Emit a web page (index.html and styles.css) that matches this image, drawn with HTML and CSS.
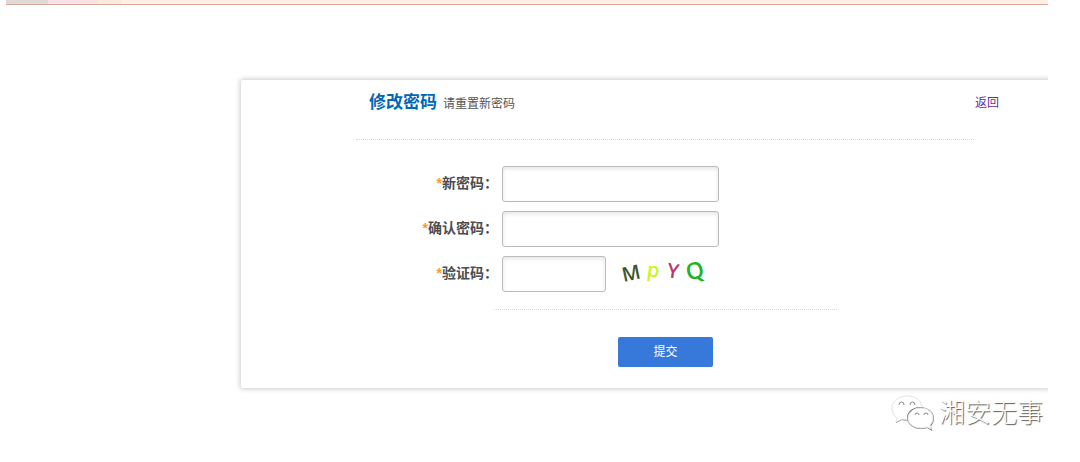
FILE: index.html
```html
<!DOCTYPE html>
<html lang="zh-CN">
<head>
<meta charset="utf-8">
<title>修改密码</title>
<link rel="stylesheet" href="styles.css">
</head>
<body>
<div class="page">
  <div class="banner"></div>
  <main class="stage">
    <section class="card">
      <header class="card-head">
        <h1 class="title">修改密码</h1>
        <span class="subtitle">请重置新密码</span>
        <a class="back" href="#">返回</a>
      </header>
      <form class="form">
        <div class="row">
          <label class="label" for="pwd"><span class="star">*</span>新密码：</label>
          <input class="field" id="pwd" type="password">
        </div>
        <div class="row">
          <label class="label" for="pwd2"><span class="star">*</span>确认密码：</label>
          <input class="field" id="pwd2" type="password">
        </div>
        <div class="row">
          <label class="label" for="code"><span class="star">*</span>验证码：</label>
          <input class="field field-short" id="code" type="text">
          <svg class="captcha" width="100" height="52" viewBox="0 -8 100 52">
            <text class="c1" x="4" y="24" transform="rotate(-12 14 18)">M</text>
            <text class="c2" x="29" y="21" transform="rotate(8 35 16)">p</text>
            <text class="c3" x="49" y="22" transform="rotate(8 55 16)">Y</text>
            <text class="c4" x="68" y="23" transform="rotate(-14 76 16)">Q</text>
          </svg>
        </div>
        <div class="actions"><button class="submit" type="button">提交</button></div>
      </form>
    </section>
  </main>
  <footer class="mark">
    <svg class="mark-icon" width="46" height="38" viewBox="0 0 46 38">
      <path class="bubble-shade" d="M16 3C7 3 2 9 2 15c0 4 2 7 5 9l-2 5 6-3c9 2 20-2 20-11C31 8 25 3 16 3z"/>
      <path class="bubble" d="M16 2C7 2 1 8 1 14c0 4 2 8 5 10l-1 4 6-3c9 2 20-2 20-11C31 7 25 2 16 2z"/>
      <path class="bubble-shade" d="M29 13c-8 0-13 5-13 11s6 11 14 11c2 0 4 0 6-1l5 3-1-5c2-2 3-5 3-8 0-6-6-11-14-11z"/>
      <path class="bubble" d="M30 14c-8 0-13 5-13 10.500s6 9.500 13 9.500c2 0 4 0 6-1l4 2-1-4c2-2 3-4 3-7 0-5.500-5-10-12-10z"/>
      <path class="eye" d="M8 11q0-3 2.500-3t2.500 3M19 11q0-3 2.500-3t2.500 3M24 21q0-2 2-2t2 2M33 21q0-2 2-2t2 2"/>
    </svg>
    <span class="mark-text">湘安无事</span>
  </footer>
</div>
</body>
</html>
```
FILE: styles.css
```css
* { box-sizing: border-box; }
body {
  margin: 0;
  background: #fff;
  color: #555;
  font-family: "Liberation Sans", "Noto Sans CJK SC", sans-serif;
  font-size: 12px;
  line-height: 18px;
}
.page { margin: 0 32px 0 6px; }
.banner {
  height: 5px;
  border-bottom: 1px solid #d5a99b;
  background: linear-gradient(90deg, #e0d9d6 42px, #f8e0e8 42px, #f9e2e4 92px, #fde8dc 92px, #fde8dc 115px, #fef0e4 115px);
}
.stage { padding: 75px 0 6px 235px; overflow: hidden; }
.card {
  margin-right: -4px;
  padding-bottom: 21px;
  border-radius: 2px;
  background: #fff;
  box-shadow: 0 0 5px 1px #ccc;
}
.card-head {
  display: flex;
  align-items: center;
  gap: 6px;
  padding: 10px 53px 0 128px;
}
.title {
  margin: 0;
  color: #0068b7;
  font-size: 17px;
  line-height: 26px;
}
.subtitle { padding-top: 2px; }
.back { margin-left: auto; color: #6a2c9c; text-decoration: none; }
.form {
  display: flex;
  flex-direction: column;
  gap: 9px;
  margin: 23px 78px 0 115px;
  padding-top: 26px;
  border-top: 1px dotted #d8d8d8;
}
.row { display: flex; align-items: center; }
.label {
  width: 146px;
  padding: 0 4px 2px 0;
  color: #4d4d4d;
  font-size: 14px;
  font-weight: bold;
  text-align: right;
}
.star { color: #ff9833; }
.field {
  width: 217px;
  height: 36px;
  padding: 0 8px;
  border: 1px solid #bbb;
  border-radius: 3px;
  background: #fff;
  box-shadow: inset 0 2px 4px #e6e6e6;
}
.field-short { width: 104px; }
.captcha {
  margin: -8px 0 -8px 12px;
  font-family: "Open Sans", sans-serif;
  font-size: 20px;
  font-weight: 600;
}
.c1 { fill: #3c5530; }
.c2 { fill: #ccf522; }
.c3 { fill: #bc3670; }
.c4 { fill: #1fb425; font-size: 23px; }
.actions {
  display: flex;
  justify-content: center;
  margin: 8px 137px 0 138px;
  padding-top: 27px;
  border-top: 1px dotted #d8d8d8;
}
.submit {
  width: 95px;
  height: 30px;
  padding: 0;
  border: 0;
  border-radius: 2px;
  background: #3779da;
  color: #fff;
  font: inherit;
}
.mark {
  display: flex;
  align-items: center;
  justify-content: flex-end;
  gap: 2px;
  padding-right: 5px;
}
.mark-text {
  color: #fff;
  font-size: 26px;
  font-weight: 300;
  line-height: 38px;
  text-shadow: 1px 1px 1px #555;
}
.bubble-shade { fill: #777; }
.bubble { fill: #fff; stroke: #e4e4e4; }
.eye { fill: none; stroke: #888; }
```
